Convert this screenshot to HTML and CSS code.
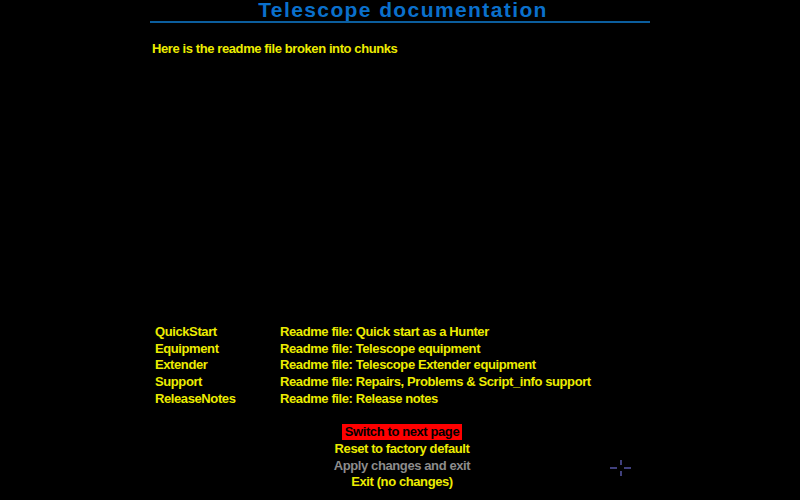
FILE: index.html
```html
<!DOCTYPE html>
<html>
<head>
<meta charset="utf-8">
<link rel="stylesheet" href="styles.css">
</head>
<body>
<div class="page">
  <header class="header">
    <h1 class="title">Telescope documentation</h1>
  </header>
  <p class="intro">Here is the readme file broken into chunks</p>
  <div class="list">
    <div class="row"><span class="key">QuickStart</span><span class="val">Readme file: Quick start as a Hunter</span></div>
    <div class="row"><span class="key">Equipment</span><span class="val">Readme file: Telescope equipment</span></div>
    <div class="row"><span class="key">Extender</span><span class="val">Readme file: Telescope Extender equipment</span></div>
    <div class="row"><span class="key">Support</span><span class="val">Readme file: Repairs, Problems &amp; Script_info support</span></div>
    <div class="row"><span class="key">ReleaseNotes</span><span class="val">Readme file: Release notes</span></div>
  </div>
  <div class="menu">
    <div class="item"><span class="selected">Switch to next page</span></div>
    <div class="item">Reset to factory default</div>
    <div class="item disabled">Apply changes and exit</div>
    <div class="item">Exit (no changes)</div>
  </div>
  <svg class="cursor" width="22" height="17" viewBox="0 0 22 17">
    <g stroke="#6c6cd0" stroke-width="1.2" fill="none">
      <line x1="11" y1="0" x2="11" y2="5"/>
      <line x1="11" y1="11" x2="11" y2="16"/>
      <line x1="0" y1="8" x2="7" y2="8"/>
      <line x1="14" y1="8" x2="21" y2="8"/>
    </g>
  </svg>
</div>
</body>
</html>
```

FILE: styles.css
```css
html, body {
  margin: 0;
  padding: 0;
  background: #000;
}

.page {
  position: relative;
  width: 800px;
  height: 500px;
  overflow: hidden;
  font-family: "Liberation Sans", Arial, sans-serif;
  font-weight: bold;
  font-size: 13px;
  letter-spacing: -0.4px;
  color: #ecec00;
}

.header {
  width: 500px;
  margin: 0 auto;
  padding-top: 1px;
  padding-bottom: 2px;
  border-bottom: 2px solid #0b5e9e;
}

.title {
  margin: 0;
  font-size: 21px;
  line-height: 18px;
  letter-spacing: 1.4px;
  text-align: center;
  color: #0a70cc;
  padding-left: 6px;
}

.intro {
  width: 498px;
  margin: 18px auto 0;
  padding-left: 2px;
  line-height: 16.75px;
}

.list {
  margin-top: 266px;
  padding-left: 155px;
  line-height: 16.75px;
}

.row {
  display: flex;
}

.key {
  width: 125px;
}

.menu {
  margin-top: 16.7px;
  padding-left: 4px;
  text-align: center;
  line-height: 16.75px;
}

.selected {
  display: inline-block;
  background: #ff0000;
  color: #000;
  padding: 0 3px;
  line-height: 16px;
}

.disabled {
  color: #8c8c8c;
}

.cursor {
  position: absolute;
  left: 610px;
  top: 460px;
}
```
